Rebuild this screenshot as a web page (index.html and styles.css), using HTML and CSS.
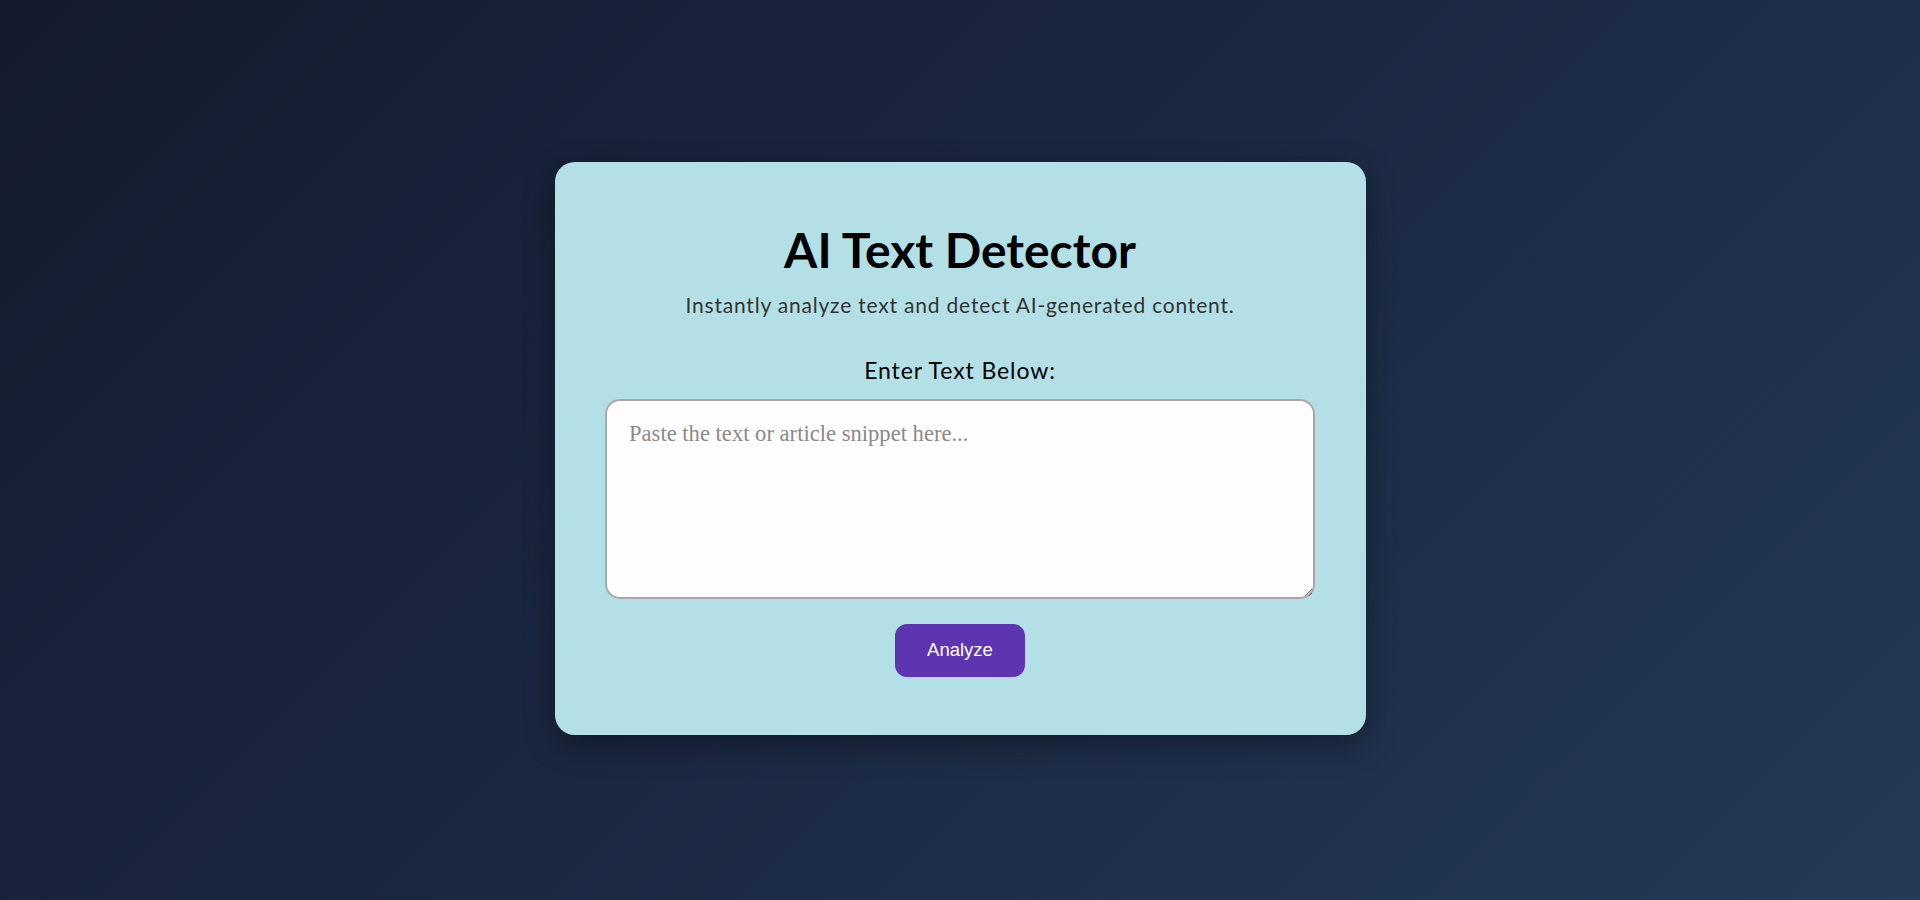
FILE: index.html
```html
<!DOCTYPE html>
<html lang="en">
<head>
<meta charset="utf-8">
<title>AI Text Detector</title>
<link rel="stylesheet" href="styles.css">
</head>
<body>
<main class="page">
  <section class="card">
    <h1 class="title">AI Text Detector</h1>
    <p class="subtitle">Instantly analyze text and detect AI-generated content.</p>
    <label class="label" for="text">Enter Text Below:</label>
    <textarea id="text" class="input" placeholder="Paste the text or article snippet here..."></textarea>
    <button class="btn" type="button">Analyze</button>
  </section>
</main>
</body>
</html>
```
FILE: styles.css
```css
html, body {
  margin: 0;
  padding: 0;
  height: 100%;
}
body {
  background: linear-gradient(135deg, #141b2d 0%, #1b2842 50%, #243a57 100%);
  font-family: "Lato", "Noto Sans", sans-serif;
}
.page {
  box-sizing: border-box;
  min-height: 900px;
  padding-bottom: 4px;
  display: flex;
  align-items: center;
  justify-content: center;
}
.card {
  box-sizing: border-box;
  width: 811px;
  padding: 60px 50px 58px;
  background: #b3e0e7;
  border-radius: 20px;
  box-shadow: 0 10px 30px rgba(0, 0, 0, 0.35);
  display: flex;
  flex-direction: column;
  align-items: center;
  text-align: center;
}
.title {
  margin: 0;
  font-size: 48px;
  line-height: 56px;
  font-weight: 700;
  color: #000;
}
.subtitle {
  margin: 14px 0 0;
  font-size: 21px;
  line-height: 25px;
  letter-spacing: 0.8px;
  color: #333;
}
.label {
  margin-top: 40px;
  font-size: 23px;
  line-height: 26px;
  letter-spacing: 0.9px;
  color: #000;
}
.input {
  box-sizing: border-box;
  margin-top: 16px;
  width: 710px;
  height: 200px;
  padding: 20px 22px;
  border: 2px solid #b0a4a4;
  border-radius: 15px;
  background: #fdfdfd;
  font-family: "Liberation Serif", "Times New Roman", serif;
  font-size: 22.6px;
  color: #222;
}
.input::placeholder {
  color: #8a8a8a;
}
.btn {
  margin-top: 25px;
  width: 130px;
  height: 53px;
  border: none;
  border-radius: 12px;
  background: #5e35b1;
  color: #fff;
  font-family: "Liberation Sans", Arial, sans-serif;
  font-size: 18.5px;
  cursor: pointer;
}
```
